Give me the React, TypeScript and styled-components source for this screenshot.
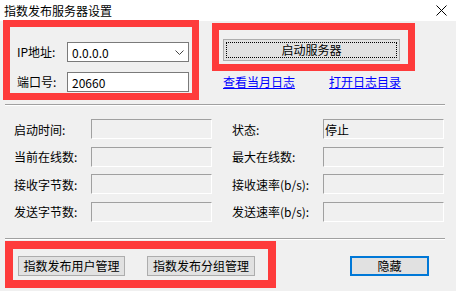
import React from "react";
import styled, { createGlobalStyle } from "styled-components";

const GlobalStyle = createGlobalStyle`
  html, body {
    margin: 0;
    padding: 0;
    background: #f0f0f0;
  }
  body {
    font-family: "Noto Sans CJK SC", "Liberation Sans", sans-serif;
    font-size: 12px;
    color: #000;
  }
`;

const Window = styled.div`
  position: relative;
  width: 456px;
  height: 291px;
  background: #f0f0f0;
  overflow: hidden;
`;

const TitleBar = styled.div`
  height: 21px;
  background: #fff;
  display: flex;
  align-items: center;
  justify-content: space-between;
  padding: 0 9px 0 4px;
  line-height: 14px;
`;

const Body = styled.div`
  display: flex;
  flex-direction: column;
`;

const TopSection = styled.div`
  display: flex;
  padding-top: 18px;
`;

const FieldsCol = styled.div`
  display: flex;
  flex-direction: column;
  gap: 10px;
  margin-top: 3px;
  margin-left: 17px;
`;

const FieldRow = styled.div`
  display: flex;
  align-items: center;
  height: 20px;
`;

const FieldLabel = styled.span`
  width: 50px;
  line-height: 14px;
`;

const Combo = styled.div`
  box-sizing: border-box;
  width: 122px;
  height: 20px;
  border: 1px solid #7a7a7a;
  background: #fff;
  display: flex;
  align-items: center;
  justify-content: space-between;
  padding: 0 4px 0 4px;
`;

const TextInput = styled.div`
  box-sizing: border-box;
  width: 122px;
  height: 20px;
  border: 1px solid #7a7a7a;
  background: #fff;
  display: flex;
  align-items: center;
  padding: 0 4px;
`;

const ActionCol = styled.div`
  display: flex;
  flex-direction: column;
  margin-left: 34px;
`;

const Button = styled.button<{ $w: number; $focus?: boolean; $default?: boolean }>`
  position: relative;
  box-sizing: border-box;
  width: ${(p) => p.$w}px;
  height: ${(p) => (p.$focus ? 22 : 20)}px;
  margin: 0;
  padding: 0;
  background: #e1e1e1;
  border: ${(p) => (p.$default ? "2px solid #0078d7" : "1px solid #adadad")};
  font-family: inherit;
  font-size: 12px;
  color: #000;
  line-height: 14px;
  &::after {
    content: "";
    display: ${(p) => (p.$focus ? "block" : "none")};
    position: absolute;
    inset: 2px;
    border: 1px dotted #000;
  }
`;

const LinkRow = styled.div`
  display: flex;
  gap: 34px;
  margin-top: 13px;
  line-height: 16px;
`;

const Link = styled.a`
  color: #0000ff;
  text-decoration: underline;
`;

const Separator = styled.div<{ $top: number }>`
  margin: ${(p) => p.$top}px 11px 0 5px;
  border-top: 1px solid #a0a0a0;
  border-bottom: 1px solid #fff;
`;

const StatsGrid = styled.div`
  display: grid;
  grid-template-columns: 77px 121px 111px 121px;
  grid-auto-rows: 20px;
  row-gap: 7.67px;
  margin: 13px 0 0 14px;
`;

const StatLabel = styled.span<{ $indent?: boolean }>`
  display: flex;
  align-items: center;
  white-space: nowrap;
  padding-left: ${(p) => (p.$indent ? 20 : 0)}px;
`;

const StatBox = styled.div`
  box-sizing: border-box;
  height: 20px;
  border-top: 1px solid #a0a0a0;
  border-left: 1px solid #a0a0a0;
  border-right: 1px solid #fff;
  border-bottom: 1px solid #fff;
  display: flex;
  align-items: center;
  padding: 0 1px;
`;

const StatCell = styled.div`
  display: contents;
`;

const BottomBar = styled.div`
  display: flex;
  align-items: center;
  gap: 22px;
  margin: 16px 27px 0 18px;
`;

const Spacer = styled.div`
  flex: 1;
`;

const Highlight = styled.div<{ $x: number; $y: number; $w: number; $h: number; $b: number }>`
  position: absolute;
  left: ${(p) => p.$x}px;
  top: ${(p) => p.$y}px;
  width: ${(p) => p.$w}px;
  height: ${(p) => p.$h}px;
  box-sizing: border-box;
  border: ${(p) => p.$b}px solid #fe3b3b;
  pointer-events: none;
`;

const stats: [string, string, string, string][] = [
  ["启动时间:", "", "状态:", "停止"],
  ["当前在线数:", "", "最大在线数:", ""],
  ["接收字节数:", "", "接收速率(b/s):", ""],
  ["发送字节数:", "", "发送速率(b/s):", ""],
];

export default function App() {
  return (
    <Window>
      <GlobalStyle />
      <TitleBar>
        <span>指数发布服务器设置</span>
        <svg width="11" height="11" viewBox="0 0 11 11">
          <path d="M0.5 0.5 L10.5 10.5 M10.5 0.5 L0.5 10.5" stroke="#000" strokeWidth="1" />
        </svg>
      </TitleBar>
      <Body>
        <TopSection>
          <FieldsCol>
            <FieldRow>
              <FieldLabel>IP地址:</FieldLabel>
              <Combo>
                <span>0.0.0.0</span>
                <svg width="9" height="5" viewBox="0 0 9 5">
                  <path d="M0.5 0.5 L4.5 4.5 L8.5 0.5" stroke="#444" strokeWidth="1" fill="none" />
                </svg>
              </Combo>
            </FieldRow>
            <FieldRow>
              <FieldLabel>端口号:</FieldLabel>
              <TextInput>20660</TextInput>
            </FieldRow>
          </FieldsCol>
          <ActionCol>
            <Button $w={177} $focus>
              启动服务器
            </Button>
            <LinkRow>
              <Link>查看当月日志</Link>
              <Link>打开日志目录</Link>
            </LinkRow>
          </ActionCol>
        </TopSection>
        <Separator $top={12} />
        <StatsGrid>
          {stats.map(([l1, v1, l2, v2]) => (
            <StatCell key={l1}>
              <StatLabel>{l1}</StatLabel>
              <StatBox>{v1}</StatBox>
              <StatLabel $indent>{l2}</StatLabel>
              <StatBox>{v2}</StatBox>
            </StatCell>
          ))}
        </StatsGrid>
        <Separator $top={16} />
        <BottomBar>
          <Button $w={107}>指数发布用户管理</Button>
          <Button $w={108}>指数发布分组管理</Button>
          <Spacer />
          <Button $w={79} $default>
            隐藏
          </Button>
        </BottomBar>
      </Body>
      <Highlight $x={3} $y={20} $w={196} $h={80} $b={7} />
      <Highlight $x={212} $y={23} $w={203} $h={48} $b={7} />
      <Highlight $x={5} $y={241} $w={271} $h={47} $b={8} />
    </Window>
  );
}
